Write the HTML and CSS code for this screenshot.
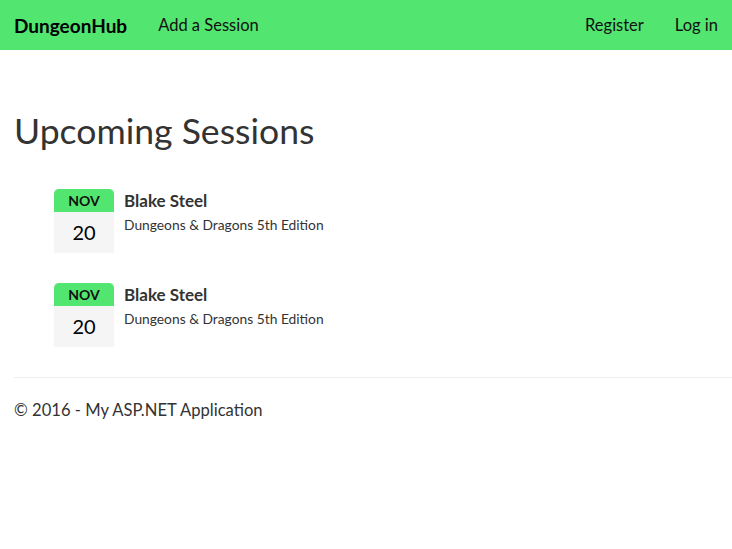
FILE: index.html
```html
<!DOCTYPE html>
<html>
<head>
<meta charset="utf-8">
<title>DungeonHub</title>
<link rel="stylesheet" href="styles.css">
</head>
<body>
<nav class="navbar">
  <div class="nav-left">
    <a class="brand" href="#">DungeonHub</a>
    <a class="nav-link" href="#">Add a Session</a>
  </div>
  <div class="nav-right">
    <a class="nav-link" href="#">Register</a>
    <a class="nav-link" href="#">Log in</a>
  </div>
</nav>
<main class="body-content">
  <h1 class="title">Upcoming Sessions</h1>
  <ul class="sessions">
    <li class="session">
      <div class="cal">
        <div class="cal-month">NOV</div>
        <div class="cal-day">20</div>
      </div>
      <div class="details">
        <div class="host">Blake Steel</div>
        <div class="game">Dungeons &amp; Dragons 5th Edition</div>
      </div>
    </li>
    <li class="session">
      <div class="cal">
        <div class="cal-month">NOV</div>
        <div class="cal-day">20</div>
      </div>
      <div class="details">
        <div class="host">Blake Steel</div>
        <div class="game">Dungeons &amp; Dragons 5th Edition</div>
      </div>
    </li>
  </ul>
  <hr class="rule">
  <footer class="footer">© 2016 - My ASP.NET Application</footer>
</main>
</body>
</html>
```
FILE: styles.css
```css
* { box-sizing: border-box; }
html, body { margin: 0; padding: 0; }
body {
  font-family: Lato, "Open Sans", sans-serif;
  font-size: 16px;
  line-height: 1.42857;
  color: #333;
  background: #fff;
}
a { text-decoration: none; color: #000; }
.navbar {
  height: 50px;
  background: #52e56f;
  display: flex;
  justify-content: space-between;
  align-items: center;
  padding: 1px 14px 0;
}
.nav-left, .nav-right { display: flex; align-items: center; }
.brand {
  font-weight: 700;
  font-size: 19px;
  margin-right: 31px;
}
.nav-link { font-size: 16.5px; color: #111; padding-top: 1px; }
.nav-right .nav-link { margin-left: 31px; }
.body-content {
  padding-left: 14px;
}
.title {
  font-size: 35.6px;
  font-weight: 400;
  margin: 61px 0 0;
  line-height: 1.1;
  color: #333;
}
.sessions {
  list-style: none;
  padding: 0 0 0 40px;
  margin: 39px 0 0;
}
.session {
  display: flex;
  margin-bottom: 30px;
}
.cal {
  width: 60px;
  background: #f5f5f5;
}
.cal-month {
  background: #52e56f;
  border-radius: 5px 5px 0 0;
  height: 23px;
  line-height: 23px;
  text-align: center;
  font-size: 14px;
  font-weight: 700;
  color: #111;
}
.cal-day {
  height: 41px;
  line-height: 41px;
  text-align: center;
  font-size: 20px;
  color: #000;
}
.details { margin-left: 10px; }
.host {
  font-weight: 700;
  font-size: 17px;
  line-height: 24px;
}
.game {
  font-size: 13.8px;
  margin-top: 2px;
}
.rule {
  border: 0;
  border-top: 1px solid #eee;
  margin: 0;
}
.footer {
  font-size: 16.6px;
  margin-top: 21px;
}
```
